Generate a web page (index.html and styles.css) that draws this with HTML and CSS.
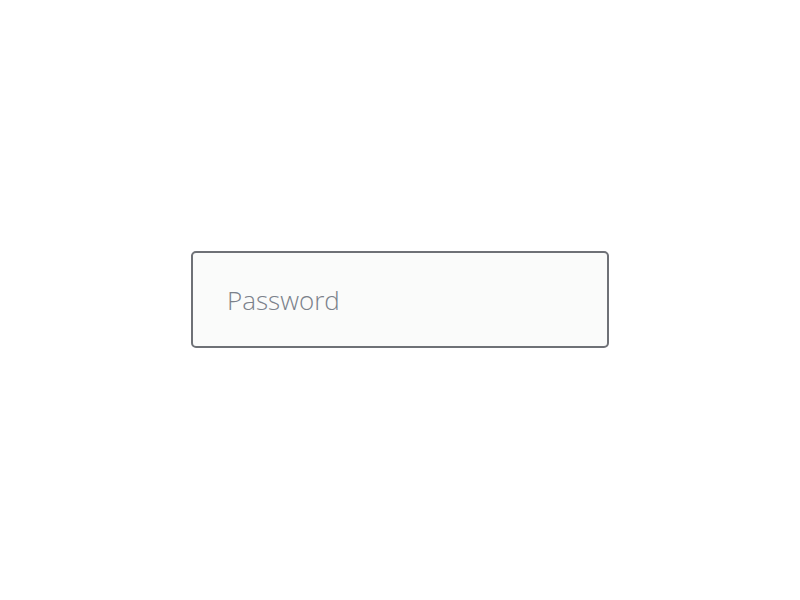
FILE: index.html
```html
<!DOCTYPE html>
<html>
<head>
<meta charset="utf-8">
<link rel="stylesheet" href="styles.css">
</head>
<body>
<div class="page">
  <div class="field">
    <span class="placeholder">Password</span>
  </div>
</div>
</body>
</html>
```

FILE: styles.css
```css
html, body {
  margin: 0;
  padding: 0;
  background: #ffffff;
}
.page {
  width: 800px;
  height: 599px;
  display: flex;
  align-items: center;
  justify-content: center;
}
.field {
  box-sizing: border-box;
  width: 418px;
  height: 97px;
  border: 2px solid #6e7176;
  border-radius: 5px;
  background: #fafbfa;
  display: flex;
  align-items: center;
  padding-left: 34px;
}
.placeholder {
  font-family: "Open Sans", sans-serif;
  font-weight: 300;
  font-size: 26px;
  color: #7b818a;
}
```
